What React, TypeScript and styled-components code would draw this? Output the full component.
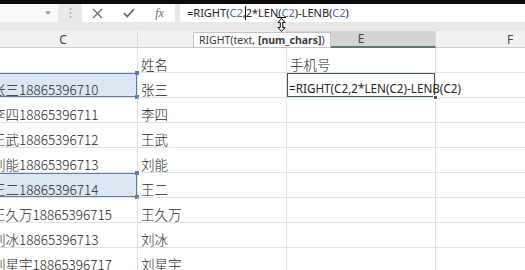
import styled, { createGlobalStyle, css } from "styled-components"

const GlobalStyle = createGlobalStyle`
  html, body {
    margin: 0;
    padding: 0;
    background: #fff;
  }
  body {
    font-family: "Noto Sans", "Noto Sans CJK SC", sans-serif;
    overflow: hidden;
  }
`

const Screen = styled.div`
  position: relative;
  width: 525px;
  height: 270px;
  overflow: hidden;
  background: #fff;
`

const TopStrip = styled.div`
  height: 4px;
  background: #0a0a0a;
`

const Ribbon = styled.div`
  height: 27px;
  background: #e8e8e8;
`

const FormulaBar = styled.div`
  display: flex;
  height: 18px;
`

const NameBox = styled.div`
  width: 58px;
  background: #f9f9f9;
  display: flex;
  align-items: center;
  justify-content: flex-end;
  padding-right: 7px;
  box-sizing: border-box;
`

const Grip = styled.div`
  width: 24px;
  display: flex;
  align-items: center;
  justify-content: center;
`

const Actions = styled.div`
  width: 93px;
  background: #fff;
  display: grid;
  grid-template-columns: repeat(3, 31px);
  align-items: center;
  justify-items: center;
`

const Fx = styled.span`
  font-family: "Liberation Serif", serif;
  font-style: italic;
  font-size: 12px;
  color: #6a6a6a;
`

const FormulaInput = styled.div`
  flex: 1;
  margin-left: 5px;
  background: #fff;
  padding-left: 7px;
  font-size: 11px;
  line-height: 18px;
  color: #222;
  white-space: nowrap;
`

const Ref = styled.span`
  color: #3a6cbc;
`

const Caret = styled.span`
  display: inline-block;
  width: 1px;
  height: 14px;
  margin: 0 -0.5px;
  background: #111;
  vertical-align: -3px;
`

const Sheet = styled.div`
  display: grid;
  grid-template-columns: repeat(4, 149px);
  grid-template-rows: 17px;
  grid-auto-rows: 25px;
  margin-left: -11px;
`

const HeaderCell = styled.div<{ $active?: boolean }>`
  display: flex;
  align-items: center;
  justify-content: center;
  box-sizing: border-box;
  background: #f1f1f1;
  border-right: 1px solid #dadada;
  border-bottom: 1px solid #cdcdcd;
  font-size: 12px;
  color: #444;
  ${(p) =>
    p.$active &&
    css`
      background: #d4d4d4;
      border-bottom: 2px solid #5d7a69;
    `}
`

const Cell = styled.div<{ $ref?: boolean; $edit?: boolean }>`
  position: relative;
  display: flex;
  align-items: flex-end;
  box-sizing: border-box;
  padding: 0 3px 0;
  border-right: 1px solid #e2e2e2;
  border-bottom: 1px solid #e2e2e2;
  font-family: "Noto Sans CJK SC", sans-serif;
  font-weight: 300;
  font-size: 13.5px;
  line-height: 15px;
  color: #262626;
  white-space: nowrap;
  ${(p) =>
    p.$ref &&
    css`
      background: #dde7f4;
      box-shadow: inset 0 0 0 1px #5b7cb3;
      &::before,
      &::after {
        content: "";
        position: absolute;
        right: -2px;
        width: 4px;
        height: 4px;
        background: #5b7cb3;
      }
      &::before {
        top: -2px;
      }
      &::after {
        bottom: -2px;
      }
    `}
  ${(p) =>
    p.$edit &&
    css`
      z-index: 2;
      font-family: "Noto Sans", sans-serif;
      font-weight: 400;
      font-size: 11.7px;
      padding-left: 2px;
      padding-bottom: 1px;
      box-shadow: inset 0 0 0 1px #3d5a49;
      &::after {
        content: "";
        position: absolute;
        right: -3px;
        bottom: -3px;
        width: 5px;
        height: 5px;
        background: #3d5a49;
        border: 1px solid #fff;
        box-sizing: border-box;
      }
    `}
`

const Tooltip = styled.div`
  position: absolute;
  left: 193px;
  top: 32px;
  height: 16px;
  box-sizing: border-box;
  padding: 0 5px;
  background: #fdfdfd;
  border: 1px solid #c4c4c4;
  font-size: 10.5px;
  line-height: 14px;
  color: #3a3a3a;
  white-space: nowrap;
`

const Pointer = styled.svg`
  position: absolute;
  left: 276px;
  top: 16px;
`

type Row = { c: string; d: string; e?: string; ref?: boolean; edit?: boolean }

const rows: Row[] = [
  { c: "", d: "姓名", e: "手机号" },
  { c: "张三18865396710", d: "张三", e: "=RIGHT(C2,2*LEN(C2)-LENB(C2)", ref: true, edit: true },
  { c: "李四18865396711", d: "李四" },
  { c: "王武18865396712", d: "王武" },
  { c: "刘能18865396713", d: "刘能" },
  { c: "王二18865396714", d: "王二", ref: true },
  { c: "王久万18865396715", d: "王久万" },
  { c: "刘冰18865396713", d: "刘冰" },
  { c: "刘星宇18865396717", d: "刘星宇" },
]

export default function App() {
  return (
    <Screen>
      <GlobalStyle />
      <TopStrip />
      <Ribbon>
        <FormulaBar>
          <NameBox>
            <svg width="6" height="4" viewBox="0 0 6 4">
              <path d="M0 0.5h6L3 3.5z" fill="#8c8c8c" />
            </svg>
          </NameBox>
          <Grip>
            <svg width="3" height="12" viewBox="0 0 3 12">
              <circle cx="1.5" cy="2" r="1" fill="#a8a8a8" />
              <circle cx="1.5" cy="6" r="1" fill="#a8a8a8" />
              <circle cx="1.5" cy="10" r="1" fill="#a8a8a8" />
            </svg>
          </Grip>
          <Actions>
            <svg width="11" height="11" viewBox="0 0 11 11">
              <path d="M1 1l9 9M10 1l-9 9" stroke="#6b6b6b" strokeWidth="1.3" />
            </svg>
            <svg width="12" height="10" viewBox="0 0 12 10">
              <path d="M1 5.2l3.3 3.3L11 1.2" stroke="#6b6b6b" strokeWidth="1.8" fill="none" />
            </svg>
            <Fx>fx</Fx>
          </Actions>
          <FormulaInput>
            =RIGHT(<Ref>C2</Ref>,<Caret />2*LEN(<Ref>C2</Ref>)-LENB(<Ref>C2</Ref>)
          </FormulaInput>
        </FormulaBar>
      </Ribbon>
      <Sheet>
        <HeaderCell>C</HeaderCell>
        <HeaderCell>D</HeaderCell>
        <HeaderCell $active>E</HeaderCell>
        <HeaderCell>F</HeaderCell>
        {rows.map((r, i) => [
          <Cell key={`c${i}`} $ref={r.ref}>{r.c}</Cell>,
          <Cell key={`d${i}`}>{r.d}</Cell>,
          <Cell key={`e${i}`} $edit={r.edit}>{r.e}</Cell>,
          <Cell key={`f${i}`} />,
        ])}
      </Sheet>
      <Tooltip>
        RIGHT(text, <b>[num_chars]</b>)
      </Tooltip>
      <Pointer width="11" height="18" viewBox="0 0 11 18">
        <path
          d="M1 1.5h9M5.5 2.5l3.5 4h-2.3v5h2.3l-3.5 4-3.5-4h2.3v-5H2z"
          fill="#fff"
          stroke="#111"
          strokeWidth="1"
          strokeLinejoin="round"
        />
      </Pointer>
    </Screen>
  )
}
